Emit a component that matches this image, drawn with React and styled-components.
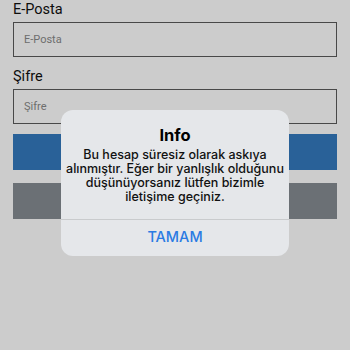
import styled, { createGlobalStyle } from "styled-components";

const GlobalStyle = createGlobalStyle`
  html, body {
    margin: 0;
    padding: 0;
    background: #ffffff;
    font-family: Roboto, "Noto Sans", sans-serif;
  }
`;

const Page = styled.div`
  width: 350px;
  height: 350px;
  padding: 0 13px;
  box-sizing: border-box;
  position: relative;
  overflow: hidden;
`;

const FormGroup = styled.div`
  display: flex;
  flex-direction: column;
  margin-bottom: 10px;
`;

const Label = styled.label`
  font-size: 14.5px;
  line-height: 20px;
  color: #111;
  margin-bottom: 2px;
`;

const Input = styled.input`
  height: 35px;
  box-sizing: border-box;
  border: 1.5px solid #5a5a5a;
  background: #ffffff;
  padding: 0 10px;
  font-family: Roboto, sans-serif;
  font-size: 11px;
  color: #111;
  outline: none;
  &::placeholder {
    color: #8a8a8a;
  }
`;

const Button = styled.button`
  display: block;
  width: 100%;
  height: 36px;
  border: none;
  margin-top: ${(p) => p.$gap}px;
  background: ${(p) => p.$bg};
  color: #fff;
  font-family: Roboto, sans-serif;
  font-size: 14px;
`;

const Overlay = styled.div`
  position: absolute;
  inset: 0;
  background: rgba(0, 0, 0, 0.2);
  display: flex;
  justify-content: center;
  align-items: flex-start;
  padding-top: 110px;
`;

const Dialog = styled.div`
  width: 228px;
  background: #e5e7ea;
  border-radius: 12px;
  display: flex;
  flex-direction: column;
  align-items: center;
  font-family: Inter, "Noto Sans", sans-serif;
  overflow: hidden;
`;

const DialogTitle = styled.div`
  margin-top: 15px;
  font-size: 16.5px;
  font-weight: 700;
  line-height: 20px;
  color: #000;
`;

const DialogText = styled.div`
  margin-top: 3px;
  padding: 0 6px 15px;
  font-size: 12.5px;
  font-weight: 500;
  line-height: 14px;
  text-align: center;
  white-space: nowrap;
  color: #111;
`;

const DialogAction = styled.button`
  width: 100%;
  height: 37px;
  padding: 0 0 3px;
  border: none;
  border-top: 1px solid #c9cbcd;
  background: transparent;
  font-family: Inter, "Noto Sans", sans-serif;
  font-size: 14.5px;
  font-weight: 500;
  color: #2a7be3;
`;

export default function App() {
  return (
    <>
      <GlobalStyle />
      <Page>
        <FormGroup>
          <Label>E-Posta</Label>
          <Input placeholder="E-Posta" />
        </FormGroup>
        <FormGroup>
          <Label>Şifre</Label>
          <Input placeholder="Şifre" type="password" />
        </FormGroup>
        <Button $bg="#347abf" $gap={3} />
        <Button $bg="#868c93" $gap={13} />
        <Overlay>
          <Dialog>
            <DialogTitle>Info</DialogTitle>
            <DialogText>
              Bu hesap süresiz olarak askıya
              <br />
              alınmıştır. Eğer bir yanlışlık olduğunu
              <br />
              düşünüyorsanız lütfen bizimle
              <br />
              iletişime geçiniz.
            </DialogText>
            <DialogAction>TAMAM</DialogAction>
          </Dialog>
        </Overlay>
      </Page>
    </>
  );
}
